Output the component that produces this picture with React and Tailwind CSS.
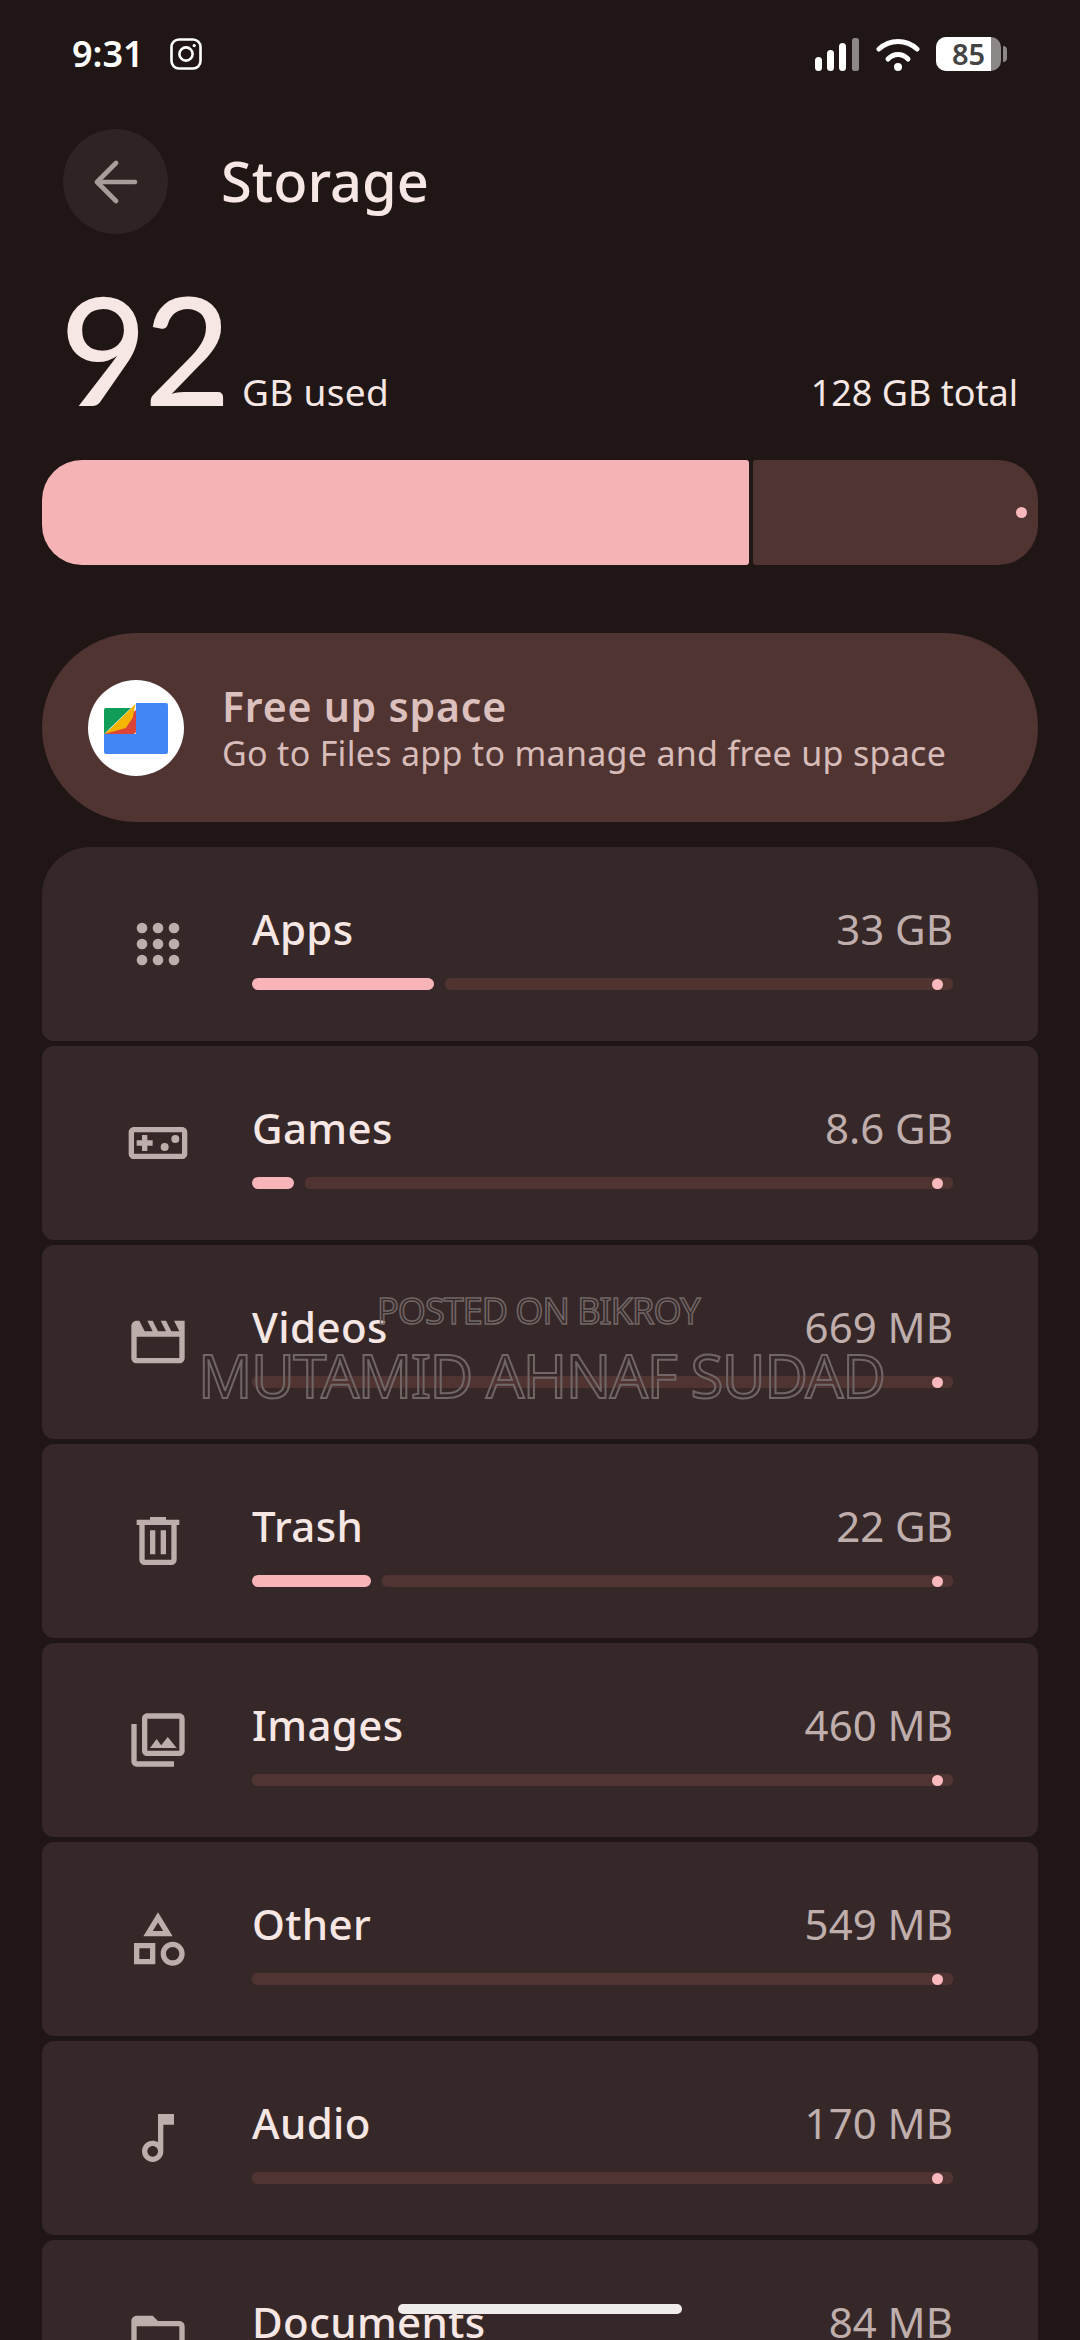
const rows = [
  { name: 'Apps', size: '33 GB', used: 182, icon: 'apps' },
  { name: 'Games', size: '8.6 GB', used: 42, icon: 'games' },
  { name: 'Videos', size: '669 MB', used: 0, icon: 'videos' },
  { name: 'Trash', size: '22 GB', used: 119, icon: 'trash' },
  { name: 'Images', size: '460 MB', used: 0, icon: 'images' },
  { name: 'Other', size: '549 MB', used: 0, icon: 'other' },
  { name: 'Audio', size: '170 MB', used: 0, icon: 'audio' },
  { name: 'Documents', size: '84 MB', used: 0, icon: 'docs' },
];

const iconPaths = {
  games:
    'M21 6H3c-1.1 0-2 .9-2 2v8c0 1.1.9 2 2 2h18c1.1 0 2-.9 2-2V8c0-1.1-.9-2-2-2zm0 10H3V8h18v8zM6 15h2v-2h2v-2H8V9H6v2H4v2h2z',
  videos:
    'M22 4h-4l2 4h-3l-2-4h-2l2 4h-3L10 4H8l2 4H7L5 4H4c-1.1 0-1.99.9-1.99 2L2 18c0 1.1.9 2 2 2h16c1.1 0 2-.9 2-2V4zM4 10h16v8H4z',
  trash:
    'M7 21q-.825 0-1.412-.587Q5 19.825 5 19V6H4V4h5V3h6v1h5v2h-1v13q0 .825-.587 1.413Q17.825 21 17 21Zm10-15H7v13h10ZM9 17h2V8H9Zm4 0h2V8h-2Z',
  images:
    'M20 4v12H8V4h12m0-2H8c-1.1 0-2 .9-2 2v12c0 1.1.9 2 2 2h12c1.1 0 2-.9 2-2V4c0-1.1-.9-2-2-2zm-8.5 9.67l1.69 2.26 2.48-3.1L19 15H9zM2 6v14c0 1.1.9 2 2 2h14v-2H4V6H2z',
  other:
    'M12 2l-5.5 9h11L12 2zm0 3.84L13.93 9h-3.87L12 5.84zM17.5 13c-2.49 0-4.5 2.01-4.5 4.5s2.01 4.5 4.5 4.5 4.5-2.01 4.5-4.5-2.01-4.5-4.5-4.5zm0 7c-1.38 0-2.5-1.12-2.5-2.5s1.12-2.5 2.5-2.5 2.5 1.12 2.5 2.5-1.12 2.5-2.5 2.5zM3 21.5h8v-8H3v8zm2-6h4v4H5v-4z',
  audio:
    'M12 3l.01 10.55c-.59-.34-1.27-.55-2-.55C7.79 13 6 14.79 6 17s1.79 4 4.01 4S14 19.21 14 17V7h4V3h-6zm-1.99 16c-1.1 0-2-.9-2-2s.9-2 2-2 2 .9 2 2-.9 2-2 2z',
  docs: 'M20 6h-8l-2-2H4c-1.1 0-1.99.9-1.99 2L2 18c0 1.1.9 2 2 2h16c1.1 0 2-.9 2-2V8c0-1.1-.9-2-2-2zm0 12H4V8h16v10z',
};

function RowIcon({ name }) {
  return (
    <svg viewBox="0 0 24 24" className="w-16 h-16 shrink-0" fill="#bdaeac">
      {name === 'apps' &&
        [6, 12, 18].map((y) =>
          [6, 12, 18].map((x) => <circle key={`${x}-${y}`} cx={x} cy={y} r="2" />)
        )}
      {name === 'games' && (
        <>
          <circle cx="14.5" cy="13.5" r="1.5" />
          <circle cx="18.5" cy="10.5" r="1.5" />
        </>
      )}
      {iconPaths[name] && <path fillRule="evenodd" d={iconPaths[name]} />}
    </svg>
  );
}

function StatusBar() {
  return (
    <div className="h-[129px] flex items-start justify-between pl-[72px] pr-[73px] pt-[37px] text-white">
      <div className="flex items-center gap-[26px]">
        <span className="text-[36px] leading-[34px] font-semibold">9:31</span>
        <svg viewBox="0 0 32 32" className="w-8 h-8" fill="none" stroke="#fff" strokeWidth="2.6">
          <rect x="1.5" y="1.5" width="29" height="29" rx="7.5" />
          <circle cx="16" cy="16" r="6.6" />
          <circle cx="24.2" cy="7.6" r="1.6" fill="#fff" stroke="none" />
        </svg>
      </div>
      <div className="flex items-center gap-4">
        <svg viewBox="0 0 46 33" className="w-[46px] h-[33px]" fill="#fff">
          <rect x="1" y="19" width="7" height="14" rx="3.5" />
          <rect x="13" y="12" width="7" height="21" rx="3.5" />
          <rect x="25" y="5" width="7" height="28" rx="3.5" />
          <rect x="38" y="0" width="7" height="33" rx="2.5" fill="#8c8886" />
        </svg>
        <svg viewBox="0 0 44 33" className="w-11 h-[33px]" fill="none" stroke="#fff" strokeWidth="5" strokeLinecap="round">
          <path d="M3 11C14 1 30 1 41 11" />
          <path d="M12 21C18 15 26 15 32 21" />
          <circle cx="22" cy="29" r="4" fill="#fff" stroke="none" />
        </svg>
        <div className="flex items-center gap-[2px]">
          <div className="relative w-[65px] h-[34px] rounded-[10px] bg-[#8c8886] overflow-hidden">
            <div className="w-[55px] h-full bg-white" />
            <div className="absolute inset-0 flex items-center justify-center text-[#444444] text-[29px] leading-[34px] font-semibold">
              85
            </div>
          </div>
          <div className="w-1 h-4 rounded-r-sm bg-[#8c8886]" />
        </div>
      </div>
    </div>
  );
}

function FilesLogo() {
  return (
    <div className="w-24 h-24 rounded-full bg-white shrink-0">
      <svg viewBox="0 0 96 96" className="w-24 h-24">
        <path d="M48 23H78a2 2 0 0 1 2 2V72a2 2 0 0 1-2 2H18a2 2 0 0 1-2-2V54H48Z" fill="#4285f4" />
        <path d="M48 30V51a3 3 0 0 1-3 3H16Z" fill="#db4437" />
        <path d="M18 28H43L16 54V30a2 2 0 0 1 2-2Z" fill="#0f9d58" />
        <path d="M17 54 47.5 24 44.6 38 37.7 48Z" fill="#f4b400" />
      </svg>
    </div>
  );
}

function StorageRow({ row, first }) {
  return (
    <div
      className={`h-[194px] shrink-0 bg-[#362828] flex items-center pl-[84px] pr-[85px] gap-[62px] ${
        first ? 'rounded-t-[48px] rounded-b-[12px]' : 'rounded-[12px]'
      }`}
    >
      <RowIcon name={row.icon} />
      <div className="flex-1 self-start pt-[54px]">
        <div className="flex items-center justify-between h-14 text-[42px] leading-[56px]">
          <span className="text-[#f6e7e4] font-medium tracking-[0.4px]">{row.name}</span>
          <span className="text-[#bfaeac]">{row.size}</span>
        </div>
        <div className="flex gap-[11px] mt-[21px]">
          {row.used > 0 && (
            <div className="h-3 rounded-full bg-[#f8b4b8]" style={{ width: row.used }} />
          )}
          <div className="relative flex-1 h-3 rounded-[5px] bg-[#503432]">
            <div className="absolute right-[10px] top-[0.5px] w-[11px] h-[11px] rounded-full bg-[#fbb9bd]" />
          </div>
        </div>
      </div>
    </div>
  );
}

export default function App() {
  return (
    <div className="relative h-[2340px] w-[1080px] overflow-hidden bg-[#1f1615] font-['Noto_Sans',sans-serif]">
      <StatusBar />

      <div className="flex items-center gap-[53px] ml-[63px] h-[105px]">
        <div className="w-[105px] h-[105px] rounded-full bg-[#2e2424] flex items-center justify-center">
          <svg viewBox="0 0 44 44" className="w-11 h-11" fill="none" stroke="#a99d9b" strokeWidth="4.6" strokeLinecap="round" strokeLinejoin="round">
            <path d="M41 22H4" />
            <path d="M22 3 3 22 22 41" />
          </svg>
        </div>
        <span className="text-[56px] leading-none font-medium text-[#f6e7e4] pb-1">Storage</span>
      </div>

      <div className="flex items-baseline justify-between h-[226px] pt-[39px] pl-[60px] pr-[62px] text-[#f6e7e4]">
        <div className="flex items-baseline gap-[14px]">
          <span className="font-['Lato',sans-serif] font-medium text-[150px] leading-[150px] tracking-[-3px]">92</span>
          <span className="text-[37px] leading-none tracking-[0.3px]">GB used</span>
        </div>
        <span className="text-[36px] leading-none">128 GB total</span>
      </div>

      <div className="flex gap-1 mx-[42px] h-[105px]">
        <div className="w-[707px] rounded-l-[40px] rounded-r-[3px] bg-[#f6b3b5]" />
        <div className="relative flex-1 rounded-r-[40px] rounded-l-[3px] bg-[#503432]">
          <div className="absolute right-[11px] top-[47px] w-[11px] h-[11px] rounded-full bg-[#fbb9bd]" />
        </div>
      </div>

      <div className="flex items-center gap-[38px] mx-[42px] mt-[68px] h-[189px] pl-[46px] rounded-full bg-[#503432]">
        <FilesLogo />
        <div className="flex flex-col">
          <span className="text-[41px] leading-[50px] font-semibold tracking-[0.8px] text-[#dcc0bd]">Free up space</span>
          <span className="text-[34px] leading-[44px] tracking-[0.3px] text-[#d8bcb9]">Go to Files app to manage and free up space</span>
        </div>
      </div>

      <div className="flex flex-col gap-[5px] mx-[42px] mt-[25px]">
        {rows.map((row, i) => (
          <StorageRow key={row.name} row={row} first={i === 0} />
        ))}
      </div>

      {/* watermark */}
      <div className="absolute left-[377px] top-[1289px] text-[36px] leading-[44px] tracking-[-1px] whitespace-nowrap text-transparent [-webkit-text-stroke:1.5px_#716666]">
        POSTED ON BIKROY
      </div>
      <div className="absolute left-[198px] top-[1337px] text-[60px] leading-[76px] tracking-[-1.5px] whitespace-nowrap text-transparent [-webkit-text-stroke:2px_#716666]">
        MUTAMID AHNAF SUDAD
      </div>

      {/* home pill */}
      <div className="absolute left-[398px] top-[2304px] w-[284px] h-[10px] rounded-full bg-[#efeceb]" />
    </div>
  );
}
